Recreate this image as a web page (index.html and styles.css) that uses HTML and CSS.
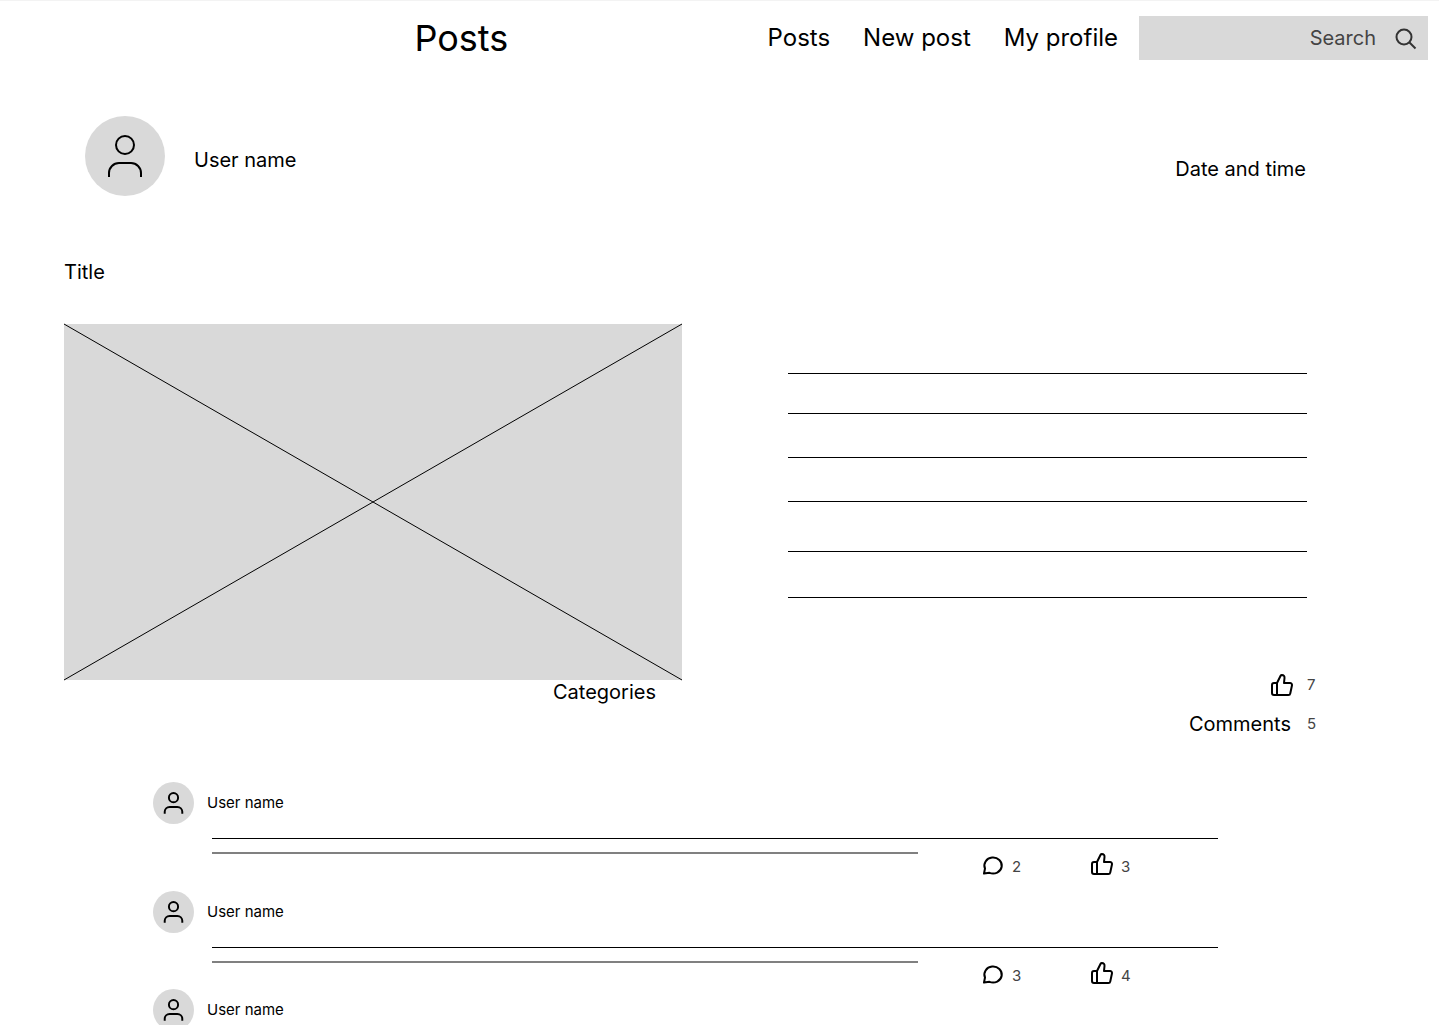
FILE: index.html
```html
<!DOCTYPE html>
<html lang="en">
<head>
<meta charset="utf-8">
<title>Posts</title>
<meta name="viewport" content="width=device-width, initial-scale=1">
<link rel="stylesheet" href="styles.css">
</head>
<body>
<svg class="sprite" aria-hidden="true">
  <symbol id="user-large" viewBox="0 0 80 80"><circle cx="40" cy="29" r="9"/><path d="M24 61v-4a10 10 0 0 1 10-10h12a10 10 0 0 1 10 10v4"/></symbol>
  <symbol id="user" viewBox="0 0 42 42"><circle cx="21" cy="15.500" r="4.700"/><path d="M12 32v-2a5 5 0 0 1 5-5h8a5 5 0 0 1 5 5v2"/></symbol>
  <symbol id="thumb" viewBox="0 0 24 24"><path d="M7 22V10L10.600 2.800Q11 2 11.800 2Q14.800 2.200 14.500 5L14 10H20a2 2 0 0 1 2 2.300l-1.700 8a2 2 0 0 1-2 1.700H4a2 2 0 0 1-2-2v-8a2 2 0 0 1 2-2h3"/></symbol>
  <symbol id="bubble" viewBox="0 0 24 24"><path d="M3 21.500l1-5A8.700 8 0 1 1 8.500 20.800z"/></symbol>
  <symbol id="magnifier" viewBox="0 0 24 24"><circle cx="10" cy="11" r="7.500"/><path d="M15.500 16.500L21.500 22.500"/></symbol>
</svg>

<header class="topbar">
  <h1 class="topbar-title">Posts</h1>
  <nav class="nav">
    <a href="#posts">Posts</a>
    <a href="#new">New post</a>
    <a href="#profile">My profile</a>
  </nav>
  <form class="search" role="search">
    <input class="search-input" type="search" placeholder="Search" aria-label="Search">
    <button class="icon-button" type="submit" aria-label="Submit search"><svg class="icon"><use href="#magnifier"/></svg></button>
  </form>
</header>

<main>
  <article>
    <div class="post-head">
      <div class="author">
        <span class="avatar avatar-large"><svg><use href="#user-large"/></svg></span>
        <span class="author-name">User name</span>
      </div>
      <span class="post-date">Date and time</span>
    </div>
    <div class="post">
      <h2 class="post-title">Title</h2>
      <div class="post-media">
        <svg class="placeholder" viewBox="0 0 618 356" preserveAspectRatio="none" role="img" aria-label="Post image"><path d="M0 0L618 356M0 356L618 0"/></svg>
        <p class="categories">Categories</p>
      </div>
      <div class="post-side">
        <div class="post-text">
          <hr><hr><hr><hr><hr><hr>
        </div>
        <div class="stats">
          <div class="stat stat-like"><button class="icon-button" type="button" aria-label="Like post"><svg class="icon"><use href="#thumb"/></svg></button><span class="count">7</span></div>
          <div class="stat"><span>Comments</span><span class="count">5</span></div>
        </div>
      </div>
    </div>
  </article>

  <section class="comments" aria-label="Comments">
    <div class="comment">
      <div class="comment-head"><span class="avatar"><svg><use href="#user"/></svg></span><span>User name</span></div>
      <div class="comment-body">
        <hr>
        <div class="comment-row">
          <hr class="line-soft">
          <div class="comment-actions">
            <div class="action"><button class="icon-button" type="button" aria-label="Reply"><svg class="icon"><use href="#bubble"/></svg></button><span class="count">2</span></div>
            <div class="action"><button class="icon-button" type="button" aria-label="Like"><svg class="icon"><use href="#thumb"/></svg></button><span class="count">3</span></div>
          </div>
        </div>
      </div>
    </div>
    <div class="comment">
      <div class="comment-head"><span class="avatar"><svg><use href="#user"/></svg></span><span>User name</span></div>
      <div class="comment-body">
        <hr>
        <div class="comment-row">
          <hr class="line-soft">
          <div class="comment-actions">
            <div class="action"><button class="icon-button" type="button" aria-label="Reply"><svg class="icon"><use href="#bubble"/></svg></button><span class="count">3</span></div>
            <div class="action"><button class="icon-button" type="button" aria-label="Like"><svg class="icon"><use href="#thumb"/></svg></button><span class="count">4</span></div>
          </div>
        </div>
      </div>
    </div>
    <div class="comment">
      <div class="comment-head"><span class="avatar"><svg><use href="#user"/></svg></span><span>User name</span></div>
    </div>
  </section>
</main>
</body>
</html>
```
FILE: styles.css
```css
* { box-sizing: border-box; }

body {
  margin: 0;
  height: 100vh;
  overflow: hidden auto;
  scrollbar-width: none;
  border-top: 1px solid #f3f3f3;
  background: #fff;
  color: #000;
  font: 20px/24px Inter, "Liberation Sans", sans-serif;
}

h1, h2, p { margin: 0; font-weight: 400; }
hr { margin: 0; border: 0; height: 1px; background: #000; }
.sprite { display: none; }

svg { display: block; fill: none; stroke: #000; stroke-width: 2; }
.icon { width: 24px; height: 24px; stroke-linejoin: round; }
.icon-button { padding: 0; border: 0; background: none; cursor: pointer; }

/* Top bar */
.topbar {
  display: flex;
  align-items: center;
  padding: 15px 11px 15px 28.8%;
}
.topbar-title { font-size: 36px; line-height: 44px; }
.nav { display: flex; gap: 33px; margin: 0 21px 0 auto; }
.nav a { color: inherit; font-size: 24px; line-height: 28px; text-decoration: none; white-space: nowrap; }
.search {
  display: flex;
  align-items: center;
  gap: 18px;
  width: 289px;
  height: 44px;
  padding-right: 10px;
  background: #d9d9d9;
}
.search-input {
  flex: 1;
  min-width: 0;
  padding: 0;
  border: 0;
  outline: 0;
  background: none;
  color: #444;
  font: inherit;
  text-align: right;
  appearance: none;
}
.search-input::-webkit-search-cancel-button { display: none; }
.search-input::placeholder { color: #444; opacity: 1; }
.search .icon { stroke: #333; }

/* Post */
.post-head {
  display: flex;
  justify-content: space-between;
  align-items: end;
  padding: 41px 133px 0 85px;
}
.author { display: flex; align-items: center; gap: 29px; }
.author-name { padding-top: 8px; }
.post-date { padding-bottom: 15px; }
.avatar {
  width: 41px;
  height: 42px;
  border-radius: 50%;
  background: #d9d9d9;
}
.avatar svg { width: 100%; height: 100%; }
.avatar-large { width: 80px; height: 80px; }

.post {
  display: grid;
  grid-template-columns: 618fr 529fr;
  column-gap: 106px;
  padding: 64px 122px 0 64px;
}
.post-title { grid-column: 1 / -1; margin-bottom: 40px; font-size: 20px; }
.placeholder { width: 100%; aspect-ratio: 618 / 356; overflow: visible; background: #d9d9d9; stroke-width: 1; }
.categories { padding-right: 26px; text-align: right; }

.post-text { display: flex; flex-direction: column; gap: 39px; padding: 49px 10px 0 0; }
.post-text hr:nth-child(n+3) { margin-top: 4px; }
.post-text hr:nth-child(5) { margin-top: 10px; }
.post-text hr:nth-child(6) { margin-top: 6px; }
.stats { display: grid; gap: 15px; margin-top: 75px; }
.stat { display: flex; justify-content: flex-end; align-items: center; gap: 16px; }
.stat-like { gap: 13px; }
.count { min-width: 10px; color: #444; font-size: 15px; line-height: 18px; }

/* Comments */
.comments { padding: 46px 221px 0 153px; font-size: 15px; }
.comment { padding-bottom: 4px; }
.comment:first-child { padding-bottom: 15px; }
.comment-head { display: flex; align-items: center; gap: 13px; margin-bottom: 14px; }
.comment-body { padding-left: 59px; }
.comment-row { display: grid; grid-template-columns: 706fr 300fr; margin-top: 13px; }
.line-soft { height: 2px; background: #808080; }
.comment-actions { display: flex; gap: 68px; padding-left: 63px; }
.action { display: flex; align-items: center; gap: 7px; }
.action .count { padding-top: 6px; }
```
